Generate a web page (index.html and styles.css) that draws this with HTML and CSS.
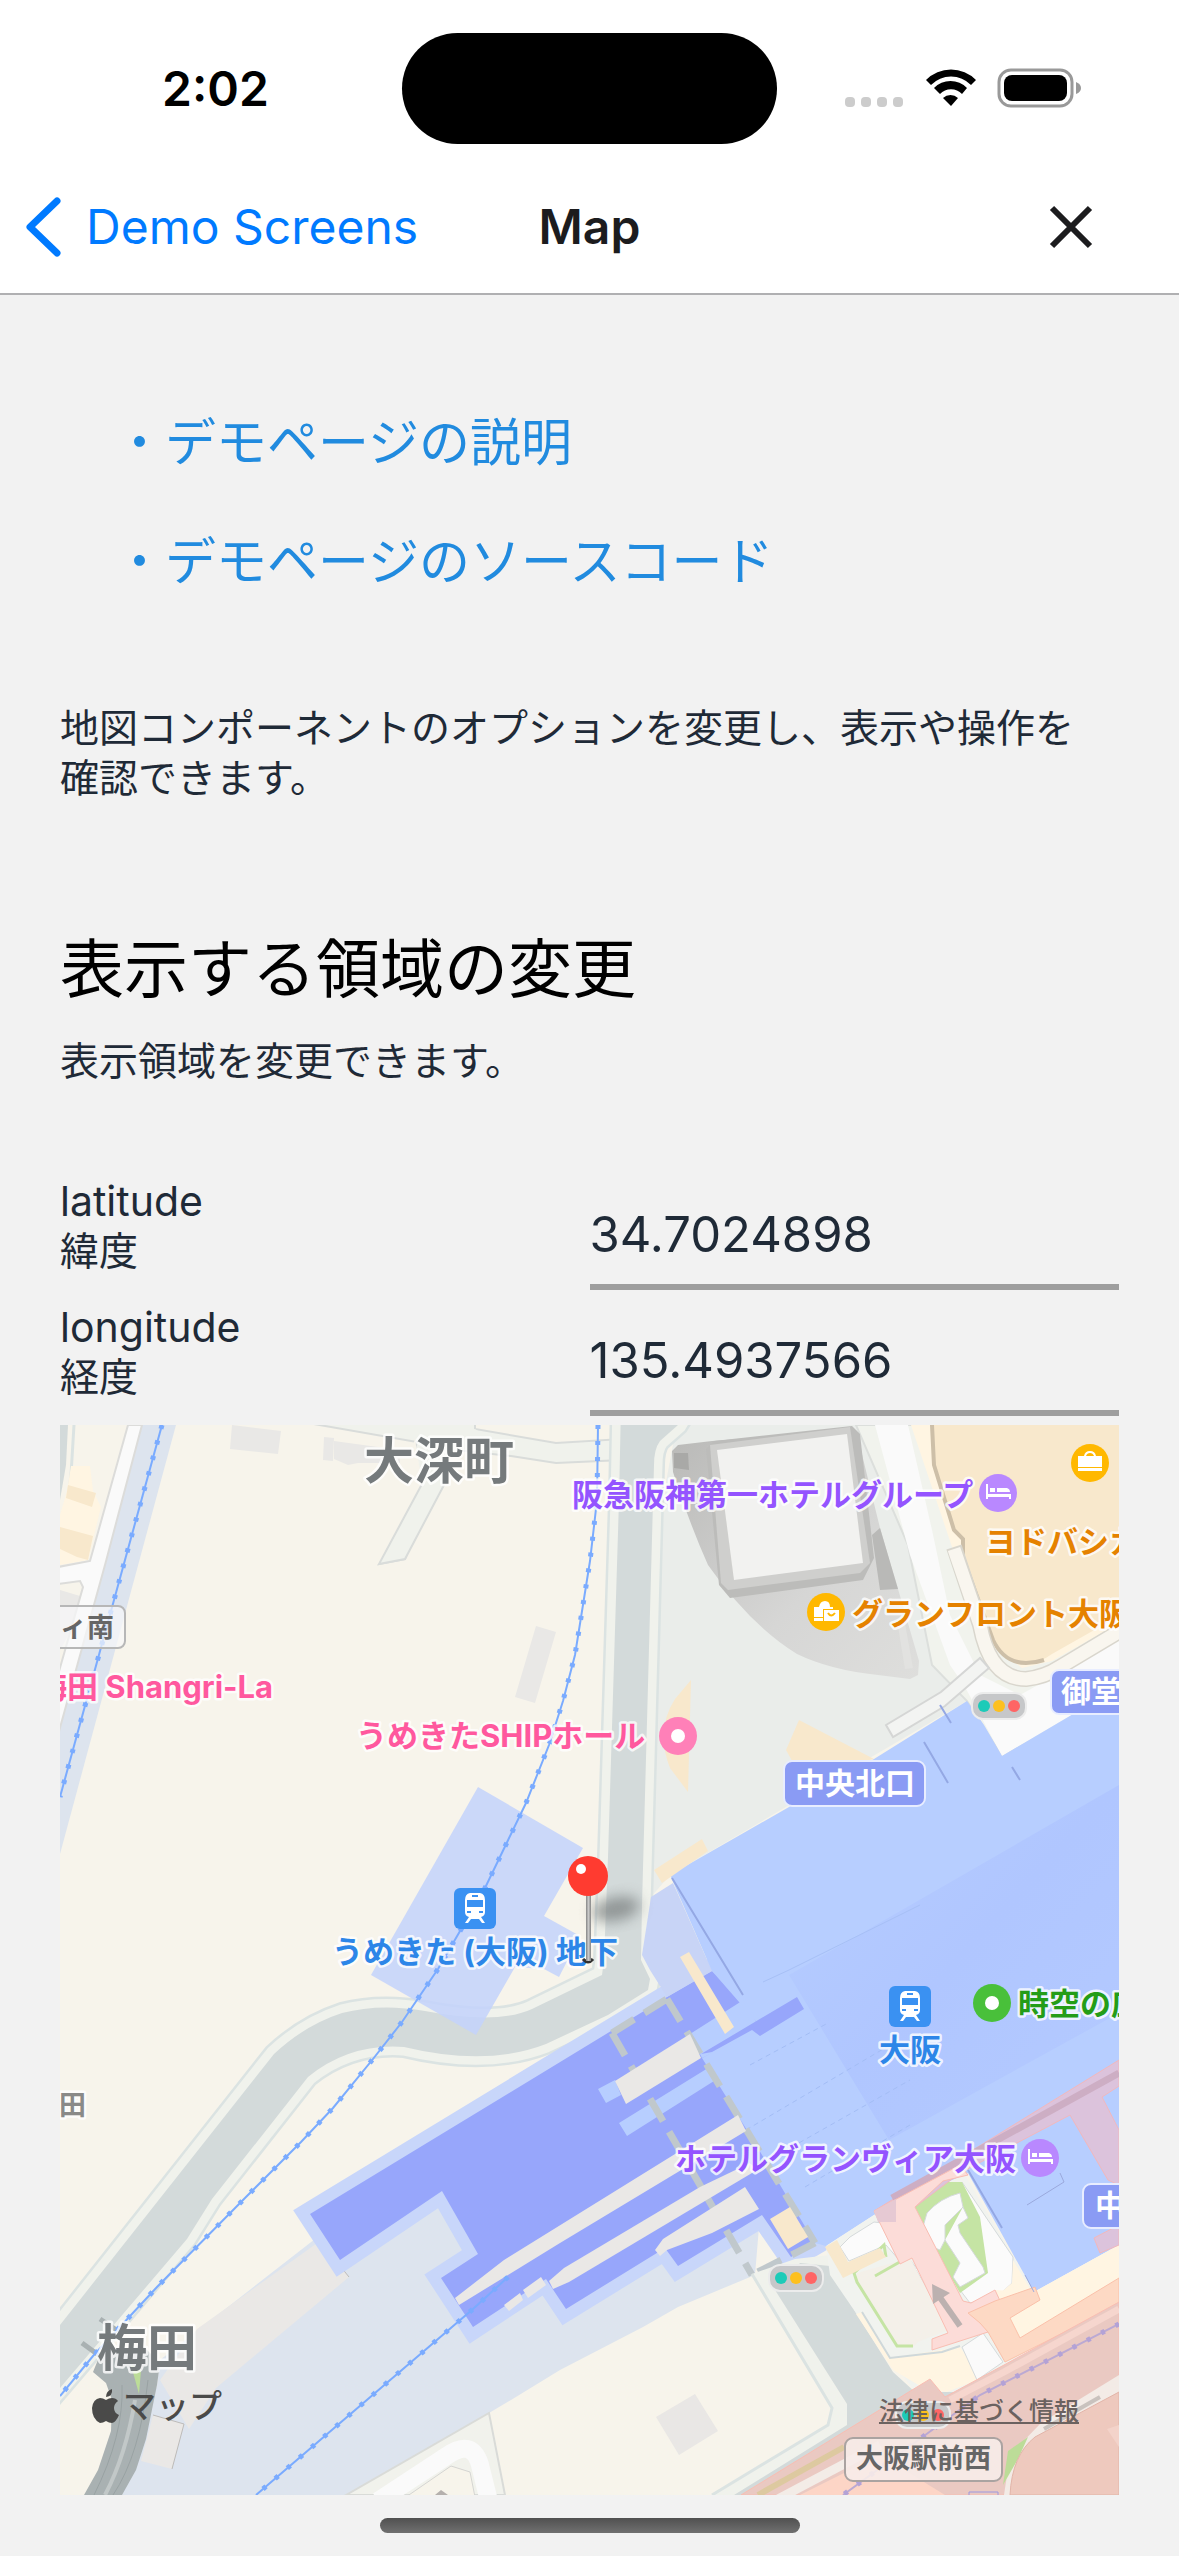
FILE: index.html
```html
<!DOCTYPE html>
<html lang="ja">
<head>
<meta charset="utf-8">
<meta name="viewport" content="width=device-width">
<title>Map</title>
<link rel="stylesheet" href="styles.css">
</head>
<body>
<header class="top">
  <div class="status">
    <span class="time">2:02</span>
    <span class="island"></span>
    <svg class="status-icons" width="240" height="44" viewBox="0 0 240 44" aria-hidden="true">
      <g fill="#ccc"><rect y="30" width="10" height="10" rx="4"/><rect x="16" y="30" width="10" height="10" rx="4"/><rect x="32" y="30" width="10" height="10" rx="4"/><rect x="48" y="30" width="10" height="10" rx="4"/></g>
      <path d="M81 13 A35 35 0 0 1 131 13 L126 18 A28 28 0 0 0 86 18Z M89 21 A23 23 0 0 1 122 21 L117 27 A15 15 0 0 0 95 27Z M98 31 A11 11 0 0 1 113 31 L106 39Z"/>
      <rect x="154" y="3" width="73" height="36" rx="12" fill="none" stroke="#999" stroke-width="3"/>
      <rect x="159" y="8" width="63" height="26" rx="8"/>
      <path d="M231 15 Q236 17 236 21 T231 27Z" fill="#999"/>
    </svg>
  </div>
  <nav class="nav">
    <a class="back" href="#">
      <svg width="36" height="60" viewBox="0 0 36 60" aria-hidden="true"><path d="M31 4 L4 30 L31 56" fill="none" stroke="#007aff" stroke-width="7" stroke-linecap="round" stroke-linejoin="round"/></svg>
      <span>Demo Screens</span>
    </a>
    <h1 class="title">Map</h1>
    <button class="close" type="button" aria-label="閉じる"><svg width="44" height="44" viewBox="0 0 44 44" aria-hidden="true"><path d="M3 3 L41 41 M41 3 L3 41" stroke="#1c1c1e" stroke-width="6"/></svg></button>
  </nav>
</header>
<main class="page">
  <div class="links">
    <a href="#">・デモページの説明</a>
    <a href="#">・デモページのソースコード</a>
  </div>
  <p class="text">地図コンポーネントのオプションを変更し、表示や操作を確認できます。</p>
  <section class="region">
    <h2>表示する領域の変更</h2>
    <p class="text">表示領域を変更できます。</p>
    <div class="form">
      <div class="field"><label for="lat"><span class="key">latitude</span><span>緯度</span></label><input id="lat" type="text" value="34.7024898"></div>
      <div class="field"><label for="lng"><span class="key">longitude</span><span>経度</span></label><input id="lng" type="text" value="135.4937566"></div>
    </div>
    <div class="map">
      <svg class="canvas" viewBox="0 0 1059 1070" role="img" aria-label="大阪駅周辺の地図">
        <defs>
          <path id="road" d="M-30 936 L0 900 L214 629 Q245 600 282 588 Q320 578 365 586 Q437 600 472 584 L542 550 L544 535 L548 432 L559 75 L561 -20 L630 -20 L618 0 L600 16 Q594 24 594 40 L582 480 L581 535 L590 554 L588 565 L548 590 L486 619 Q427 642 344 622 Q290 618 248 652 L152 774 L127 814 L0 963 L-30 998Z"/>
          <path id="hall" d="M250 789 L607 572 L652 546 L690 580 L744 700 L755 818 L731 832 L702 790 L618 841 L605 823 L506 884 L486 854 L413 902 L381 853 L418 829 L382 766 L280 835Z"/>
          <path id="rail-a" d="M102 0 L0 372"/>
          <path id="rail-b" d="M538 0 L537 75 L530 136 L515 230 L503 276 L489 320 L466 378 L425 463 L378 544 L342 597 L313 634 L273 683 L241 717 L185 773 L97 862 L33 931 L0 971"/>
          <path id="rail-c" d="M448 852 L413 884 L196 1070"/>
          <path id="rail-d" d="M1059 899 L920 970 L783 1070"/>
          <linearGradient id="sky" x1="0" y1="0" x2="1" y2="1"><stop offset="0" stop-color="#b7ceff"/><stop offset=".5" stop-color="#b0c6ff"/><stop offset="1" stop-color="#b4caff"/></linearGradient>
          <linearGradient id="stone" x1="0" y1="0" x2="1" y2="1"><stop offset="0" stop-color="#b9b9b7"/><stop offset=".6" stop-color="#d6d6d5"/><stop offset="1" stop-color="#dededc"/></linearGradient>
          <linearGradient id="rod" x1="0" y1="0" x2="1" y2="0"><stop offset="0" stop-color="#858585"/><stop offset=".5" stop-color="#c8c8c8"/><stop offset="1" stop-color="#858585"/></linearGradient>
          <filter id="soft" x="-50%" y="-50%" width="200%" height="200%"><feGaussianBlur stdDeviation="7"/></filter>
          <g id="train"><rect width="42" height="41" rx="6" fill="#3a91f2"/><path d="M16 5 H26 Q31 6 31 12 V24 Q31 28 27 29 L31 35 H28 L25 31 H17 L14 35 H11 L15 29 Q11 28 11 24 V12 Q11 6 16 5Z" fill="#fff"/><rect x="13" y="12" width="16" height="7" fill="#3a91f2"/><rect x="18" y="7" width="6" height="2" fill="#3a91f2"/><rect x="13" y="23" width="4" height="2" fill="#3a91f2"/><rect x="25" y="23" width="4" height="2" fill="#3a91f2"/></g>
          <g id="bed"><circle cx="19" cy="19" r="19" fill="#b988ff"/><path d="M7 10 H9 V20 H32 V25 H30 V23 H9 V25 H7Z M11 14 H16 V18 H11Z M18 14 H28 Q31 15 31 18 H18Z" fill="#fff"/></g>
          <g id="signal"><rect width="54" height="26" rx="11" fill="#c6c7c9" stroke="#ececec" stroke-width="2"/><circle cx="12" cy="13" r="6" fill="#1dcbb8"/><circle cx="27" cy="13" r="6" fill="#fdc01f"/><circle cx="42" cy="13" r="6" fill="#ff6565"/></g>
        </defs>
        <rect width="1059" height="1070" fill="#f7f4eb"/>

        <!-- west blocks -->
        <path d="M0 0 H8 L6 40 L0 75Z" fill="#d3dada"/>
        <path d="M14 0 L11 50 Q8 80 0 105" fill="none" stroke="#dbe3e2" stroke-width="3"/>
        <path d="M11 41 L30 41 L33 66 L41 82 L28 135 L0 140 V90 L7 66Z" fill="#fff5e2"/>
        <path d="M8 60 L36 68 L32 82 L6 73Z M0 102 L33 111 L28 135 L17 132 L0 124Z" fill="#f8e8cc"/>
        <path d="M0 165 L20 171 L14 200 L0 225Z" fill="#e9e8e6"/>
        <path d="M82 0 H116 L0 429 V300Z" fill="#dde4ee"/>
        <path d="M68 0 L30 136 L-2 142 V159 L20 156 L23 162 L-2 250 V310 L45 140 L82 0Z" fill="#fafafa" stroke="#dcdcda" stroke-width="2"/>
        <path d="M172 0 L221 6 L218 29 L170 24Z M264 12 L274 13 L273 36 L263 35Z M274 16 L340 25 V38 L298 38 L288 40 L274 34Z M476 201 L496 207 L475 278 L455 272Z" fill="#e9e8e6"/>
        <path d="M248 -2 L357 17 L319 139 L345 134 L388 24 L451 31 L496 38 L562 35 V14 L496 18 L415 4 V-2Z" fill="#f0f2ec" stroke="#d9dcda" stroke-width="2"/>
        <path d="M357 14 L415 4 L440 20 L388 27Z" fill="#f0f2ec"/>
        <path d="M357 18 L362 59 L319 139 L345 134 L384 60 L390 24Z" fill="#f0f2ec"/>
        <path d="M362 59 L355 14 L312 139 L319 139Z" fill="#f7f4eb"/>
        <path d="M362 59 L319 139 L345 134 L384 60" fill="none" stroke="#d9dcda" stroke-width="2"/>

        <!-- north-east plaza and blocks -->
        <path d="M617 -2 H830 L907 276 L610 450 L591 472 L598 100Z" fill="#eaedea"/>
        <path d="M796 0 H1059 V270 L942 331 L907 276 L872 240 L848 120Z" fill="#f1f3ed" stroke="#dcdfdc" stroke-width="2"/>
        <path d="M815 0 H848 L872 105 L890 190 L920 250 L960 270 L1059 215 V262 L942 331 L905 262 L890 240 L850 130Z" fill="#fafafa"/>
        <path d="M851 0 L892 122 L925 215 L962 243 L992 236 L1059 198 V0Z" fill="#fff5e2"/>
        <path d="M872 0 L874 40 L894 105 L903 114 V133 L933 215 Q944 238 966 238 Q980 238 992 229 L1059 191 V0Z" fill="#f8e8cc"/>
        <path d="M872 0 L874 40 L894 105 L903 114 V133 L933 215 Q944 238 966 238 Q975 238 984 235" fill="none" stroke="#cdbfa8" stroke-width="4"/>
        <path d="M894 122 L920 200 Q930 254 966 254 Q985 252 1000 242 L1070 200" fill="none" stroke="#d9d6cd" stroke-width="16"/>
        <path d="M894 124 L920 200 Q930 254 966 254 Q985 252 1000 242 L1070 200" fill="none" stroke="#f9f6ef" stroke-width="13"/>
        <path d="M826 300 L881 267 L920 233 L929 243 L885 281 L833 312Z" fill="#f3f4f2" stroke="#d5d6d5" stroke-width="2"/>
        <path d="M612 26 L618 20 L652 16 L796 5 L820 103 L838 164 L859 236 L858 250 L850 254 L818 250 Q770 245 737 229 Q690 200 648 140 Q630 100 613 47Z" fill="url(#stone)"/>
        <path d="M646 24 L654 16 L792 1 L800 9 L814 133 L803 155 L670 173 L659 160Z" fill="#bcbcba"/>
        <path d="M650 20 L790 2 L810 138 L800 148 L668 165 L661 158Z" fill="#cfcfcd"/>
        <path d="M657 25 L787 9 L803 138 L674 155Z" fill="#f2f2f0"/>
        <path d="M820 103 L838 164 L820 165 L812 110Z" fill="#b9b9b7"/>
        <path d="M837 195 L844 193 L853 243 L845 244Z" fill="#e2e2e0"/>
        <path d="M614 28 H628 L629 45 L614 43Z" fill="#a9a9a7"/>
        <path d="M631 255 L628 367 L610 343 Q595 305 615 274Z M739 295 L814 334 L740 350 L726 325Z" fill="#f8e8cc"/>

        <!-- roads -->
        <use href="#road" fill="#dbe3e2" stroke="#dbe3e2" stroke-width="22"/>
        <use href="#road" fill="#f0f2ec" stroke="#f0f2ec" stroke-width="17"/>
        <use href="#road" fill="#d3dada"/>
        <path d="M418 362 L523 423 L484 491 L520 511 L499 552 L484 544 L455 542 L416 610 L311 550Z" fill="#c3d2fb" opacity=".85"/>

        <!-- rail yard -->
        <path d="M100 935 L255 814 L380 760 L560 700 L700 790 L695 850 L618 882 L583 902 L500 945 L451 975 L429 988 L286 1070 H62 L97 960Z" fill="#dde4ee"/>
        <path d="M260 816 L289 852 L156 963 L129 1004 L100 955 L137 904Z M93 990 L124 999 L112 1044 L81 1036Z" fill="#eae8e6"/>
        <path d="M260 816 L289 852 M93 990 L124 999 L112 1044" fill="none" stroke="#bdbbb9" stroke-width="1"/>
        <path d="M286 1070 L429 988 L445 1070Z" fill="#f1f2ec" stroke="#d9dbd8" stroke-width="2"/>
        <path d="M318 1076 L385 1032 Q412 1012 420 1040 L429 1076" fill="none" stroke="#fafafa" stroke-width="18"/>
        <path d="M346 1072 L391 1041 L410 1047 L415 1072Z" fill="#f7f4eb" stroke="#d5d5d2" stroke-width="1"/>
        <path d="M375 1070 L381 1065 L388 1070Z" fill="#b5b0ad"/>
        <path d="M33 947 L46 958 L52 975 L51 1006 L38 1045 L24 1070 H62 L76 1045 L86 1014 L97 960 L100 938 L84 922 L42 925Z" fill="#a9b1b2"/>
        <path d="M22 918 L44 934 M40 894 L58 906" stroke="#a9b1b2" stroke-width="5"/>
        <path d="M75 975 Q66 1030 45 1070" fill="none" stroke="#c2c8c8" stroke-width="4"/>
        <path d="M88 955 Q80 1030 53 1070 M62 960 Q64 1010 34 1070" fill="none" stroke="#99a2a3" stroke-width="1"/>
        <path d="M71 940 L81 945 L79 969Z" fill="#bcdc98"/>

        <!-- station -->
        <use href="#hall" fill="#c8d6fa" stroke="#c8d6fa" stroke-width="24"/>
        <use href="#hall" fill="#97a6fb"/>
        <path d="M591 472 L613 458 L652 546 L607 572 L590 545 L582 530Z" fill="#c8d4f6"/>
        <path d="M610 450 L729 382 L814 334 L907 276 L924 300 L942 331 L1059 262 V820 L974 867 L908 748 L814 790 L766 821 L755 818 L690 710 L642 633 L700 601 L652 546Z" fill="#b7ceff"/>
        <path d="M729 550 L829 715 L1059 588 V360Z" fill="url(#sky)"/>
        <path d="M612 453 L683 570 M880 280 L891 298 M864 317 L888 358 M952 342 L960 355 M908 745 L942 803" stroke="#94a8e4" stroke-width="2"/>
        <path d="M686 705 L830 620 M700 740 L850 655 M745 762 L850 700 M690 640 L768 598" stroke="#a3bdf5" stroke-width="1" stroke-dasharray="5 4"/>
        <path d="M703 557 L729 545 L860 480" fill="none" stroke="#a7c0f6" stroke-width="1"/>
        <path d="M538 664 L555 655 L561 670 L546 678Z M559 698 L648 643 L654 656 L567 711Z M630 609 L685 574 L700 605 L642 633Z" fill="#b7ceff"/>
        <path d="M641 629 L737 572 L744 584 L700 611 L692 605 L652 627Z" fill="#97a6fb"/>
        <path d="M552 608 L607 574 M607 574 L755 818 M552 608 L692 850 M755 818 L692 850" stroke="#c0c8cc" stroke-width="7" fill="none" stroke-dasharray="26 12"/>
        <g fill="#eae8e6">
          <path d="M395 873 L444 835 L678 690 L686 706 L500 818 L399 880Z"/>
          <path d="M489 856 L504 843 L640 762 L690 738 L697 745 L509 857 L493 864Z"/>
          <path d="M444 880 L460 868 L463 875 L449 886Z M463 865 L481 852 L486 860 L468 873Z"/>
          <path d="M595 825 L603 814 L685 762 L699 784 L652 808 L607 825 L600 831Z"/>
          <path d="M555 656 L630 609 L641 633 L566 679Z"/>
        </g>
        <path d="M594 445 L642 414 L648 426 L602 458Z M620 532 L629 527 L674 602 L665 609Z M710 794 L730 782 L748 812 L728 824Z" fill="#f8e8cc"/>

        <!-- south-east -->
        <path d="M692 849 L772 983 L768 1000 L652 1070 H700 L800 1000 L800 880 L770 830 L735 834Z" fill="#f0f2ec"/>
        <path d="M692 849 L772 983 L768 1000 L652 1070" fill="none" stroke="#dbe3e2" stroke-width="3"/>
        <path d="M715 865 L740 838 L770 841 L796 888 L833 947 L855 967 L911 967 L870 1070 H674 L787 1000 V979Z" fill="#d3dada"/>
        <path d="M596 992 L635 969 L658 1006 L619 1030Z" fill="#e9e7e5"/>
        <path d="M766 821 L814 790 L905 750 L974 867 L1059 820 V960 L911 967 L855 967 L796 888 L770 850Z" fill="#f1f3ef"/>
        <path d="M780 822 L790 812 L814 797 L840 800 V836 L826 820 L789 836Z M902 757 L953 832 L952 858 L937 872 L910 878 L900 865Z M850 835 L862 850 L880 885Z" fill="#fbfbfb" stroke="#d5dadb" stroke-width="1"/>
        <path d="M953 835 L972 867 L942 880 L938 870 L952 858Z" fill="#fff5e2"/>
        <path d="M853 780 L883 757 L902 757 L920 792 L928 848 L900 868 L875 825 L863 805Z" fill="#c5e4a4"/>
        <path d="M862 805 L867 788 Q880 773 900 768 L903 782 L908 793 L898 800 L900 808 L923 842 L925 848 L900 862 L893 852 L900 838 L885 815 L880 825 L875 823Z M903 782 L885 800 V815" fill="#fbfbfb" stroke="#d5dadb" stroke-width="1"/>
        <path d="M797 848 L850 833 L888 905 L858 917 L853 922 H837 L797 858Z" fill="#f4f0e9"/>
        <path d="M853 921 H837 L797 857 L794 848 L824 820 L826 832 M815 851 L845 834" fill="none" stroke="#c5e4a4" stroke-width="3"/>
        <path d="M765 822 L777 815 L788 837 L820 823 L826 832 L783 853Z" fill="#f8e8cc"/>
        <path d="M796 889 L802 887 L830 933 L900 922 L917 947 V955 L887 967 L867 965 L833 945Z M974 867 L1059 820 V853 L959 914 L935 865Z" fill="#fff5e2"/>
        <path d="M802 887 L830 933 L882 927 L900 921" fill="none" stroke="#cfd8da" stroke-width="2"/>
        <path d="M902 922 L923 908 L943 937 L917 955Z" fill="#fafafa" stroke="#d5dadb" stroke-width="1"/>
        <path d="M814 786 L1059 635 V661 L1042 672 L1059 705 V760 L1048 755 L1010 690 L900 748 L855 782Z M1034 813 L1059 800 V820 L1040 828Z" fill="#dcc3dc" stroke="#f2b8bc" stroke-width="1"/>
        <path d="M832 773 L1059 648" stroke="#cdaec4" stroke-width="7"/>
        <path d="M814 786 L900 740 L908 750 L883 756 L855 782 L903 876 L911 878 L935 865 L942 880 L928 907 L872 925 V914 L888 908 L852 833 L840 839Z" fill="#fcdcd8" stroke="#f9bdb2" stroke-width="1"/>
        <path d="M814 786 L836 774 V797 L818 797Z" fill="#e6c9d3"/>
        <path d="M908 888 L935 876 L975 862 L980 875 L950 893 L960 913 L1059 853 V880 L945 937 L928 907 L920 898Z" fill="#fdd9c4" stroke="#fac0a9" stroke-width="1"/>
        <path d="M1059 877 L944 940 L885 972 L870 954 L681 1070 H944 L981 998 L1059 955Z" fill="#eac9c2" stroke="#f9bdb2" stroke-width="1"/>
        <path d="M1059 884 L944 947 L890 975" fill="none" stroke="#f6d6ce" stroke-width="7"/>
        <path d="M698 1070 L784 1022" stroke="#ddc9a0" stroke-width="6"/>
        <path d="M718 1074 L820 1020" stroke="#f3ece7" stroke-width="9"/>
        <path d="M740 1070 L820 1030 L885 1070Z" fill="#fdd5c6"/>
        <path d="M944 1070 L950 1030 L981 998 L1059 950 V1070Z" fill="#f3ebe6"/>
        <path d="M943 1060 L948 1026 L968 1012 L958 1034Z" fill="#bcdc98"/>
        <path d="M950 1070 Q952 1030 975 1012 L1059 967 V1070Z" fill="#eec9be" stroke="#e2b4a8" stroke-width="1"/>
        <path d="M1059 1000 L1047 1004 L1059 1022Z" fill="#f3d3ca"/>
        <path d="M984 1004 L1040 972" stroke="#c9c2be" stroke-width="4"/>
        <path d="M909 1067 H938 V1072 H909Z" fill="none" stroke="#9c98e0" stroke-width="1"/>
        <path d="M900 901 L879 871" stroke="#bcb1b0" stroke-width="6"/>
        <path d="M872 859 L890 868 L873 879Z" fill="#bcb1b0"/>
        <path d="M974 867 L965 850 M967 780 L1004 757 L1000 748" fill="none" stroke="#9aa9dd" stroke-width="1"/>

        <!-- rail lines -->
        <g fill="none" stroke="#7aabff" stroke-width="2"><use href="#rail-a"/><use href="#rail-b"/><use href="#rail-c"/></g>
        <g fill="none" stroke="#7aabff" stroke-width="5" stroke-dasharray="4 12"><use href="#rail-a"/><use href="#rail-b"/><use href="#rail-c"/></g>
        <use href="#rail-d" fill="none" stroke="#bba9d3" stroke-width="2"/>
        <use href="#rail-d" fill="none" stroke="#b3a2d6" stroke-width="5" stroke-dasharray="4 12"/>

        <!-- road signs and symbols -->
        <rect x="-10" y="181" width="75" height="42" rx="7" fill="#f8f8fa" fill-opacity=".7" stroke="#b7b7b7" stroke-width="2"/>
        <rect x="724" y="336" width="141" height="45" rx="8" fill="#8a9bf4" stroke="#e8edff" stroke-width="2"/>
        <rect x="991" y="245" width="80" height="44" rx="8" fill="#8a9bf4" stroke="#e8edff" stroke-width="2"/>
        <rect x="1023" y="759" width="60" height="44" rx="8" fill="#8a9bf4" stroke="#e8edff" stroke-width="2"/>
        <rect x="785" y="1013" width="157" height="43" rx="8" fill="#f7ece9" fill-opacity=".9" stroke="#aaa3a1" stroke-width="2"/>
        <use href="#signal" x="912" y="268"/><use href="#signal" x="709" y="840"/><use href="#signal" x="836" y="977"/>
        <use href="#bed" x="919" y="49"/><use href="#bed" x="961" y="714"/>
        <use href="#train" x="394" y="463"/><use href="#train" x="829" y="561"/>
        <circle cx="1030" cy="38" r="19" fill="#ffb800"/><path d="M1018 31 H1024 Q1025 26 1030 26 T1036 31 H1042 V42 H1018Z M1026 31 H1034 Q1033 28 1030 28 T1026 31Z M1018 43 H1042 V46 H1018Z" fill="#fff" fill-rule="evenodd"/>
        <circle cx="766" cy="187" r="19" fill="#ffb800"/><path d="M754 182 H759 Q760 176 765 176 T770 182 H773 V184 H763 V192 H754Z M754 193 H763 V196 H754Z M764 185 H779 V196 H764Z" fill="#fff"/><path d="M768 188 Q771 193 775 188" fill="none" stroke="#ffb800" stroke-width="2"/>
        <circle cx="618" cy="311" r="19" fill="#ff80b8"/><circle cx="618" cy="311" r="7" fill="#fff"/>
        <circle cx="932" cy="578" r="19" fill="#49c03a"/><circle cx="932" cy="578" r="7" fill="#fff"/>

        <g class="labels">
          <text class="district" x="304" y="54">大深町</text>
          <text class="district" x="37" y="941">梅田</text>
          <text class="hotel" x="512" y="81">阪急阪神第一ホテルグループ</text>
          <text class="hotel" x="615" y="745">ホテルグランヴィア大阪</text>
          <text class="shop" x="925" y="128">ヨドバシカ</text>
          <text class="shop" x="792" y="200">グランフロント大阪</text>
          <text class="venue" x="-24" y="273">梅田 Shangri-La</text>
          <text class="venue" x="296" y="322">うめきたSHIPホール</text>
          <text class="station" x="272" y="538">うめきた (大阪) 地下</text>
          <text class="station" x="819" y="636">大阪</text>
          <text class="park" x="958" y="590">時空の広</text>
          <text class="block" x="-1" y="690">田</text>
          <text class="sign" x="0" y="212">ィ南</text>
          <text class="sign" x="796" y="1043">大阪駅前西</text>
          <text class="exit" x="735" y="369">中央北口</text>
          <text class="exit" x="1001" y="277">御堂</text>
          <text class="exit" x="1035" y="791">中</text>
        </g>

        <ellipse cx="556" cy="484" rx="24" ry="12" fill="#7b8181" opacity=".75" transform="rotate(-12 556 484)" filter="url(#soft)"/>
        <path d="M523 534 Q528 540 533 534" fill="none" stroke="#333" stroke-width="3"/>
        <rect x="526" y="468" width="5" height="68" fill="url(#rod)"/>
        <circle cx="528" cy="451" r="20" fill="#ff3b30"/><circle cx="521" cy="444" r="5" fill="#fff"/>
      </svg>
      <div class="credit">
        <svg width="28" height="36" viewBox="0 0 28 36" aria-hidden="true"><path d="M20 1 Q21 8 14 9 Q14 3 20 1Z M14 12 Q17 10 20 10 Q24 10 26 13 Q22 16 22 20 Q22 25 27 27 Q24 34 20 35 Q17 35 14 33 Q11 35 8 35 Q0 31 0 20 Q1 11 8 10 Q11 10 14 12Z" fill="#4a4a49"/></svg>
        <span>マップ</span>
      </div>
      <a class="legal" href="#">法律に基づく情報</a>
    </div>
  </section>
</main>
<div class="home"></div>
</body>
</html>
```
FILE: styles.css
```css
* { box-sizing: border-box; }
body {
  margin: 0;
  background: #f2f2f2;
  color: #1f2a37;
  font-family: Inter, "Noto Sans CJK JP", sans-serif;
  font-size: 39px;
  line-height: 50px;
}
h1, h2, p { margin: 0; font-weight: 400; }
a { text-decoration: none; }
svg { display: block; flex: none; }

.top { background: #fff; border-bottom: 2px solid #b0b0b2; }
.status {
  display: grid;
  grid-template-columns: 1fr 375px 1fr;
  align-items: center;
  padding-top: 33px;
  color: #000;
}
.time { font-size: 48px; font-weight: 600; padding-left: 29px; text-align: center; }
.island { height: 111px; border-radius: 56px; background: #000; }
.status-icons { margin-left: 68px; }
.nav {
  display: grid;
  grid-template-columns: 1fr auto 1fr;
  align-items: center;
  height: 149px;
  padding: 16px 86px 0 26px;
  font-size: 48px;
  line-height: 60px;
}
.back { display: flex; align-items: center; gap: 24px; color: #007aff; white-space: nowrap; }
.title { padding-left: 60px; font-size: 48px; font-weight: 600; color: #1c1c1e; }
.close { justify-self: end; padding: 0; border: 0; background: none; }

.page { padding: 88px 60px 0; }
.links { display: grid; gap: 44px; padding: 22px 54px 104px; font-size: 51px; line-height: 75px; }
.links a { color: #218bdf; }
.text { padding-right: 30px; }
.region { padding-top: 128px; }
.region h2 { margin-bottom: 30px; color: #000; font-size: 64px; line-height: 75px; }
.form { display: grid; gap: 6px; padding: 84px 0 9px; }
.field { display: grid; grid-template-columns: 1fr 1fr; height: 120px; }
.field label { display: grid; align-content: start; padding-top: 6px; }
.key { font-size: 41px; }
.field input {
  width: 100%;
  min-width: 0;
  padding: 16px 0 0;
  border: 0;
  border-bottom: 6px solid #9e9e9e;
  border-radius: 0;
  outline: 0;
  background: none;
  color: inherit;
  font: inherit;
  font-size: 49px;
}

.map { position: relative; overflow: hidden; }
.canvas { width: 100%; height: auto; }
.labels { font-size: 31px; font-weight: 700; paint-order: stroke; stroke: #fff; stroke-opacity: .8; stroke-width: 5px; stroke-linejoin: round; }
.district { font-size: 50px; fill: #757a7c; }
.hotel { fill: #9454ff; }
.shop { fill: #e58200; }
.venue { fill: #ff589e; }
.station { fill: #2d86e8; }
.park { fill: #249d18; }
.block { font-size: 27px; fill: #8a8a88; }
.sign { font-size: 27px; fill: #666; stroke-width: 0; }
.exit { font-size: 30px; fill: #fff; stroke-width: 0; }
.credit {
  position: absolute;
  left: 32px;
  bottom: 64px;
  display: flex;
  align-items: center;
  gap: 3px;
  color: #4a4a49;
  font-size: 33px;
  font-weight: 500;
  line-height: 50px;
}
.legal {
  position: absolute;
  right: 40px;
  bottom: 64px;
  color: #6b6260;
  font-size: 25px;
  font-weight: 500;
  line-height: 40px;
  text-decoration: underline;
}
.home { width: 420px; height: 15px; margin: 23px auto; border-radius: 8px; background: linear-gradient(#505050, #707070); }
```
